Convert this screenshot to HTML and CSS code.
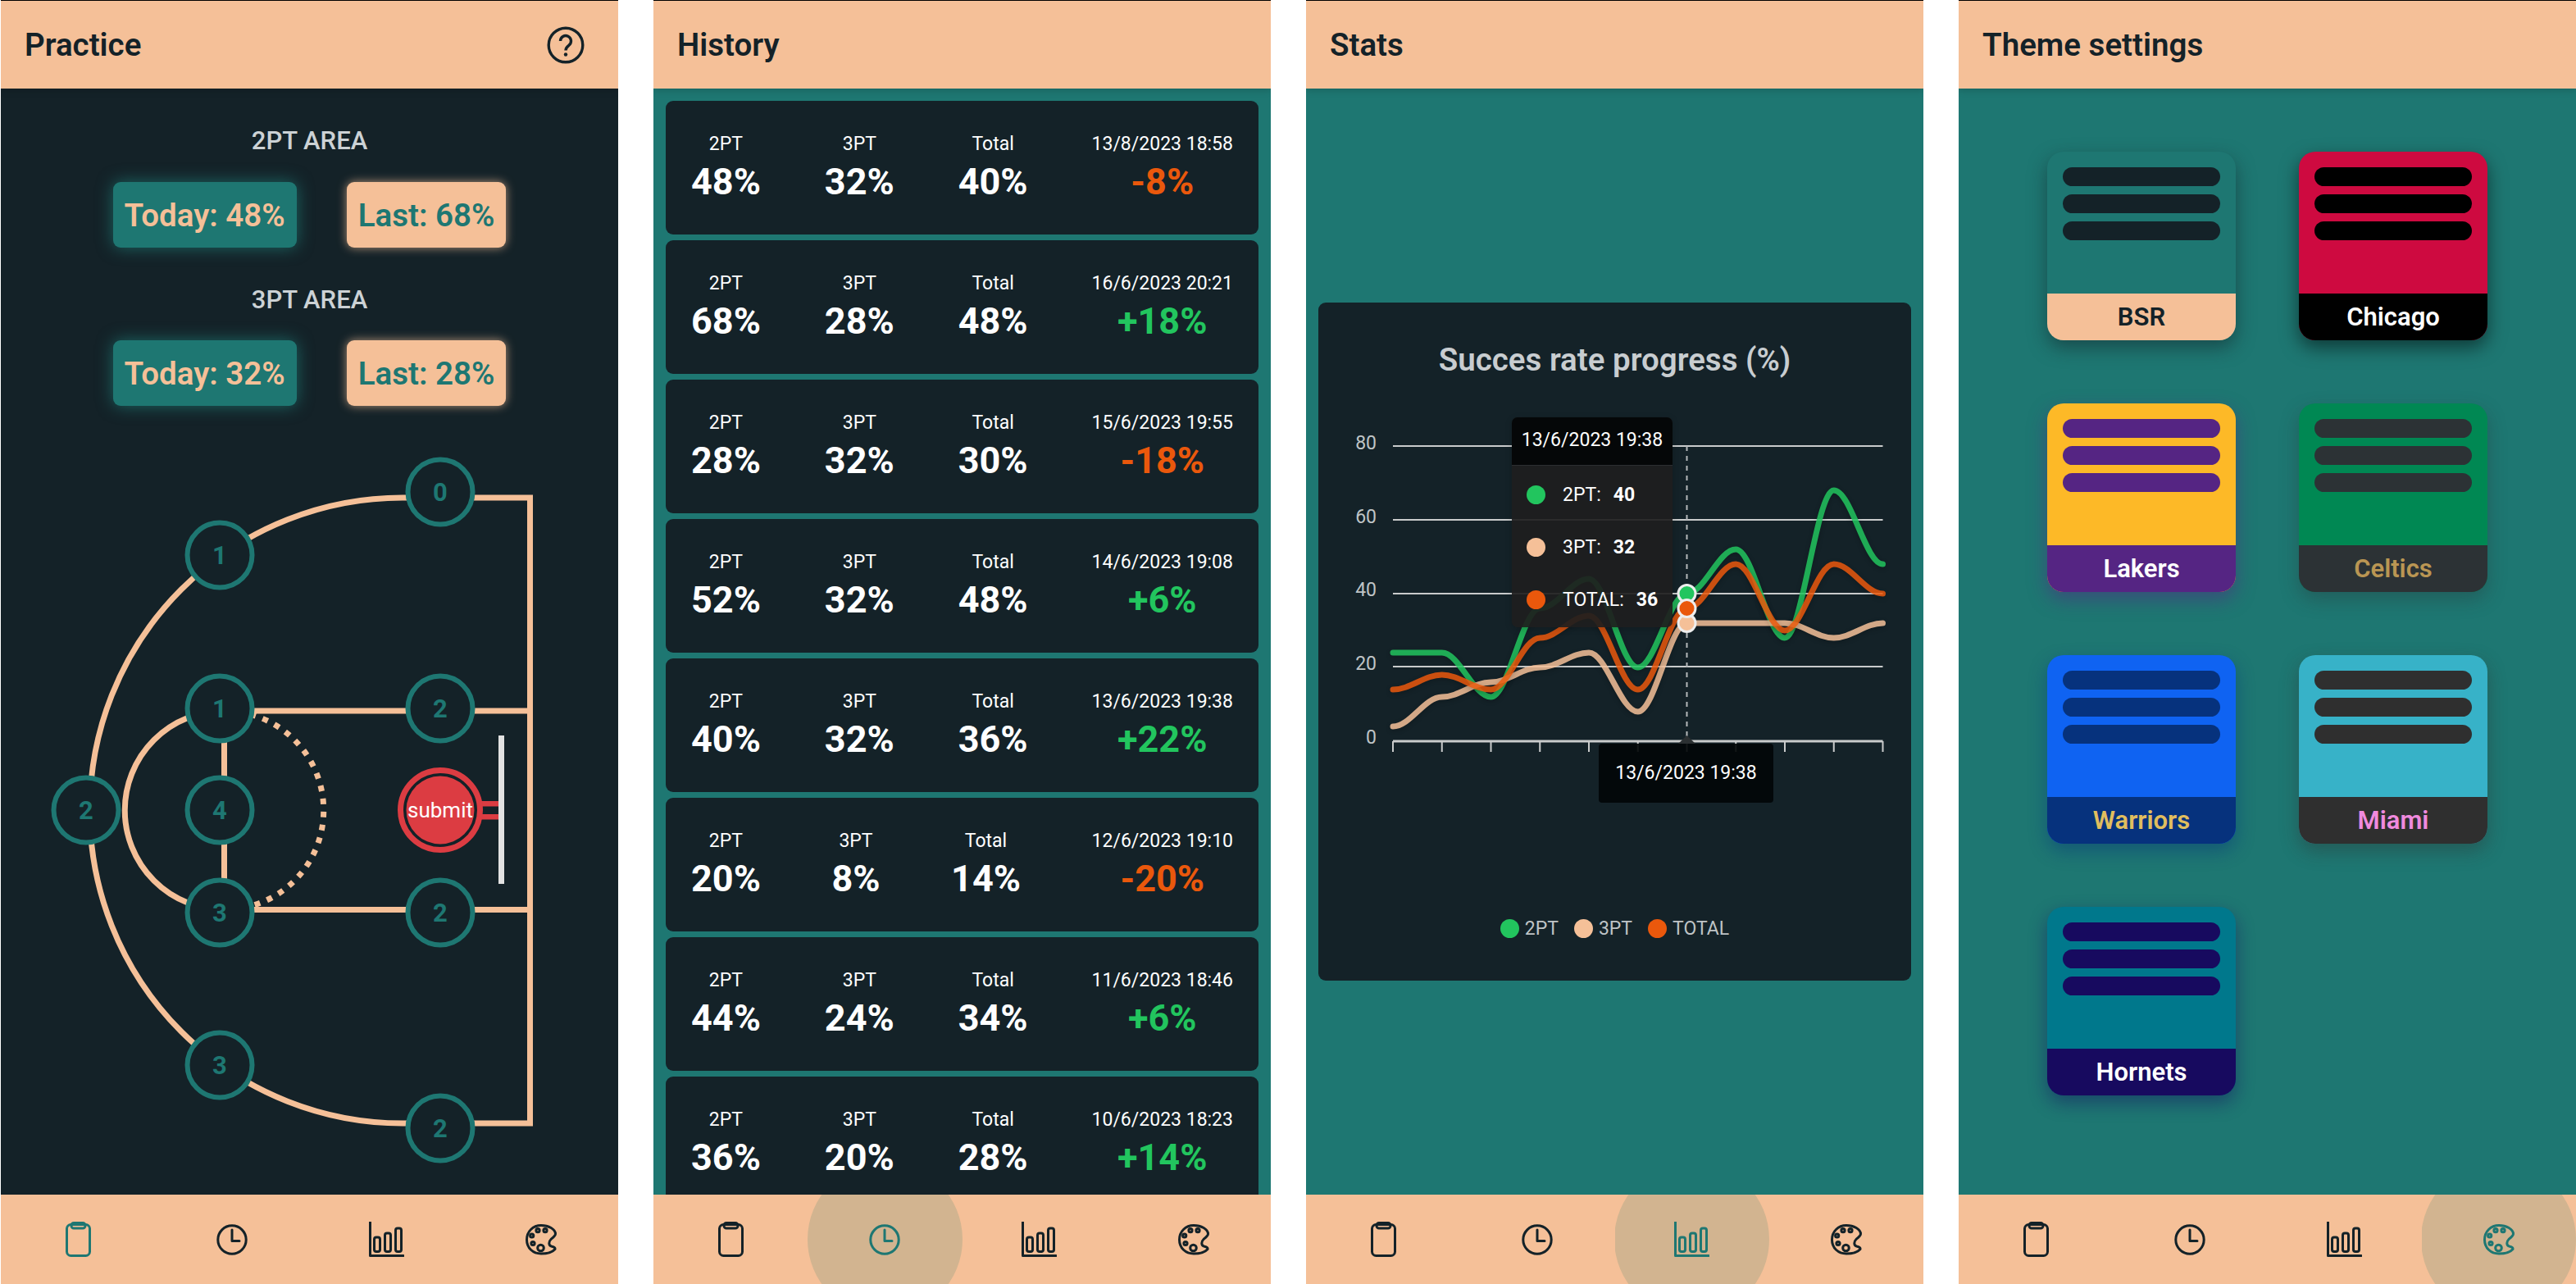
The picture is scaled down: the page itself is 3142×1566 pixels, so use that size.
FILE: index.html
```html
<!DOCTYPE html>
<html lang="en">
<head>
<meta charset="utf-8">
<title>BSR</title>
<link rel="stylesheet" href="styles.css">
</head>
<body>
<svg class="defs" width="0" height="0" aria-hidden="true">
  <symbol id="i-clip" viewBox="0 0 31 43"><rect x="1.500" y="3.500" width="28" height="38" rx="5"/><rect x="7" y="1.500" width="17" height="6.500" rx="3"/></symbol>
  <symbol id="i-clock" viewBox="0 0 38 38"><circle cx="19" cy="19" r="17.200"/><path d="M19 7V20.500H28"/></symbol>
  <symbol id="i-chart" viewBox="0 0 43 43"><path d="M1.500 0V41.500H42"/><rect x="6.500" y="19" width="7" height="17.500" rx="2.500"/><rect x="19.500" y="14" width="7" height="22.500" rx="2.500"/><rect x="32.500" y="8" width="7" height="28.500" rx="2.500"/></symbol>
  <symbol id="i-palette" viewBox="0 0 38 38"><path d="M19 1.500C9 1.500 1.500 9 1.500 19S9 36 19 36C27 36 33 34 36 30.500C36.500 28 34 27.500 31.500 27C28 26 28 21.500 31 18.500C34 16 36.500 14 36.500 12C36.500 6 28 1.500 19 1.500Z"/><circle class="dot" cx="7.700" cy="14" r="2.100"/><circle class="dot" cx="15" cy="7.700" r="2.100"/><circle class="dot" cx="24" cy="7.700" r="2.100"/><circle class="dot" cx="9" cy="23.500" r="2.100"/><circle class="dot" cx="18.500" cy="29" r="3.800"/></symbol>
</svg>

<main class="screens">
  <!-- Practice -->
  <section class="panel panel-dark">
    <header class="topbar">
      <h1>Practice</h1>
      <svg class="help" viewBox="0 0 46 46" aria-hidden="true"><circle cx="23" cy="23" r="20.800"/><path d="M16.500 18a6.500 6.500 0 1 1 10.500 5.200c-2.600 2-4 3-4 6.300"/><circle class="dot" cx="23" cy="34.500" r="2.200"/></svg>
    </header>
    <div class="body practice">
      <h2 class="area-title">2PT AREA</h2>
      <div class="score-row">
        <div class="score score-today">Today: 48%</div>
        <div class="score score-last">Last: 68%</div>
      </div>
      <h2 class="area-title area-second">3PT AREA</h2>
      <div class="score-row">
        <div class="score score-today">Today: 32%</div>
        <div class="score score-last">Last: 28%</div>
      </div>
      <svg class="court" viewBox="0 540 753 917" role="img" aria-label="Court">
        <g class="court-lines">
          <path d="M490 607H645.500V1370H490A381.500 381.500 0 0 1 490 607Z"/>
          <path d="M267 867H645.500M267 1109.500H645.500"/>
          <path d="M272.500 867V1109.500"/>
          <path d="M272.500 867A121.250 121.250 0 0 0 272.500 1109.500"/>
          <path class="dotted" d="M272.500 867A121.250 121.250 0 0 1 272.500 1109.500"/>
        </g>
        <rect class="hoop-bar" x="607" y="897" width="7" height="181"/>
        <rect class="hoop-arm" x="586" y="977" width="21" height="6.500"/>
        <rect class="hoop-arm" x="586" y="993" width="21" height="6.500"/>
        <circle class="hoop-ring" cx="536" cy="988" r="48.500"/>
        <circle class="hoop-in" cx="536" cy="988" r="41.500"/>
        <text class="submit" x="536" y="988" dy=".33em">submit</text>
        <g class="node"><circle cx="536" cy="600" r="39.500"/><text x="536" y="600" dy=".36em">0</text></g>
        <g class="node"><circle cx="267" cy="677" r="39.500"/><text x="267" y="677" dy=".36em">1</text></g>
        <g class="node"><circle cx="267" cy="864" r="39.500"/><text x="267" y="864" dy=".36em">1</text></g>
        <g class="node"><circle cx="536" cy="864" r="39.500"/><text x="536" y="864" dy=".36em">2</text></g>
        <g class="node"><circle cx="267" cy="988" r="39.500"/><text x="267" y="988" dy=".36em">4</text></g>
        <g class="node"><circle cx="104" cy="988" r="39.500"/><text x="104" y="988" dy=".36em">2</text></g>
        <g class="node"><circle cx="267" cy="1113" r="39.500"/><text x="267" y="1113" dy=".36em">3</text></g>
        <g class="node"><circle cx="536" cy="1113" r="39.500"/><text x="536" y="1113" dy=".36em">2</text></g>
        <g class="node"><circle cx="267" cy="1299" r="39.500"/><text x="267" y="1299" dy=".36em">3</text></g>
        <g class="node"><circle cx="536" cy="1376" r="39.500"/><text x="536" y="1376" dy=".36em">2</text></g>
      </svg>
    </div>
    <nav class="tabs">
      <div class="tab tab-on-plain"><svg class="ic ic-clip"><use href="#i-clip"/></svg></div>
      <div class="tab"><svg class="ic ic-clock"><use href="#i-clock"/></svg></div>
      <div class="tab"><svg class="ic ic-chart"><use href="#i-chart"/></svg></div>
      <div class="tab"><svg class="ic ic-clock"><use href="#i-palette"/></svg></div>
    </nav>
  </section>

  <!-- History -->
  <section class="panel panel-teal">
    <header class="topbar"><h1>History</h1></header>
    <div class="body history">
      <article class="run">
        <div class="col"><span class="lab">2PT</span><strong>48%</strong></div>
        <div class="col"><span class="lab">3PT</span><strong>32%</strong></div>
        <div class="col"><span class="lab">Total</span><strong>40%</strong></div>
        <div class="col"><span class="lab">13/8/2023 18:58</span><strong class="down">-8%</strong></div>
      </article>
      <article class="run">
        <div class="col"><span class="lab">2PT</span><strong>68%</strong></div>
        <div class="col"><span class="lab">3PT</span><strong>28%</strong></div>
        <div class="col"><span class="lab">Total</span><strong>48%</strong></div>
        <div class="col"><span class="lab">16/6/2023 20:21</span><strong class="up">+18%</strong></div>
      </article>
      <article class="run">
        <div class="col"><span class="lab">2PT</span><strong>28%</strong></div>
        <div class="col"><span class="lab">3PT</span><strong>32%</strong></div>
        <div class="col"><span class="lab">Total</span><strong>30%</strong></div>
        <div class="col"><span class="lab">15/6/2023 19:55</span><strong class="down">-18%</strong></div>
      </article>
      <article class="run">
        <div class="col"><span class="lab">2PT</span><strong>52%</strong></div>
        <div class="col"><span class="lab">3PT</span><strong>32%</strong></div>
        <div class="col"><span class="lab">Total</span><strong>48%</strong></div>
        <div class="col"><span class="lab">14/6/2023 19:08</span><strong class="up">+6%</strong></div>
      </article>
      <article class="run">
        <div class="col"><span class="lab">2PT</span><strong>40%</strong></div>
        <div class="col"><span class="lab">3PT</span><strong>32%</strong></div>
        <div class="col"><span class="lab">Total</span><strong>36%</strong></div>
        <div class="col"><span class="lab">13/6/2023 19:38</span><strong class="up">+22%</strong></div>
      </article>
      <article class="run">
        <div class="col"><span class="lab">2PT</span><strong>20%</strong></div>
        <div class="col"><span class="lab">3PT</span><strong>8%</strong></div>
        <div class="col"><span class="lab">Total</span><strong>14%</strong></div>
        <div class="col"><span class="lab">12/6/2023 19:10</span><strong class="down">-20%</strong></div>
      </article>
      <article class="run">
        <div class="col"><span class="lab">2PT</span><strong>44%</strong></div>
        <div class="col"><span class="lab">3PT</span><strong>24%</strong></div>
        <div class="col"><span class="lab">Total</span><strong>34%</strong></div>
        <div class="col"><span class="lab">11/6/2023 18:46</span><strong class="up">+6%</strong></div>
      </article>
      <article class="run">
        <div class="col"><span class="lab">2PT</span><strong>36%</strong></div>
        <div class="col"><span class="lab">3PT</span><strong>20%</strong></div>
        <div class="col"><span class="lab">Total</span><strong>28%</strong></div>
        <div class="col"><span class="lab">10/6/2023 18:23</span><strong class="up">+14%</strong></div>
      </article>
    </div>
    <nav class="tabs">
      <div class="tab"><svg class="ic ic-clip"><use href="#i-clip"/></svg></div>
      <div class="tab tab-on"><svg class="ic ic-clock"><use href="#i-clock"/></svg></div>
      <div class="tab"><svg class="ic ic-chart"><use href="#i-chart"/></svg></div>
      <div class="tab"><svg class="ic ic-clock"><use href="#i-palette"/></svg></div>
    </nav>
  </section>

  <!-- Stats -->
  <section class="panel panel-teal">
    <header class="topbar"><h1>Stats</h1></header>
    <div class="body stats">
      <div class="chart-card">
        <h2 class="chart-title">Succes rate progress (%)</h2>
        <div class="chart">
          <svg class="plot" viewBox="0 140 723 600" role="img" aria-label="Succes rate progress">
            <g class="grid">
              <path d="M91 175H688.500M91 265H688.500M91 355H688.500M91 444H688.500"/>
              <path class="axis" d="M91 535H688.500"/>
              <path d="M91 535V548M150.750 535V548M210.500 535V548M270.250 535V548M330 535V548M389.750 535V548M449.500 535V548M509.250 535V548M569 535V548M628.750 535V548M688.500 535V548"/>
            </g>
            <g class="ylabels">
              <text x="71" y="171" dy=".35em">80</text>
              <text x="71" y="261" dy=".35em">60</text>
              <text x="71" y="350" dy=".35em">40</text>
              <text x="71" y="440" dy=".35em">20</text>
              <text x="71" y="530" dy=".35em">0</text>
            </g>
            <path class="cross" d="M449.500 175V535"/>
            <path class="line line-2pt" d="M91 427C112 427 129.750 427 150.750 427S189.500 481 210.500 481S249.250 373 270.250 373S309 337 330 337S368.750 445 389.750 445S428.500 355 449.500 355S488.250 301 509.250 301S548 409 569 409S607.750 229 628.750 229S667.500 319 688.500 319"/>
            <path class="line line-3pt" d="M91 517C112 517 129.750 481 150.750 481S189.500 463 210.500 463S249.250 445 270.250 445S309 427 330 427S368.750 499 389.750 499S428.500 391 449.500 391S488.250 391 509.250 391S548 391 569 391S607.750 409 628.750 409S667.500 391 688.500 391"/>
            <path class="line line-tot" d="M91 472C112 472 129.750 454 150.750 454S189.500 472 210.500 472S249.250 409 270.250 409S309 382 330 382S368.750 472 389.750 472S428.500 373 449.500 373S488.250 319 509.250 319S548 400 569 400S607.750 319 628.750 319S667.500 355 688.500 355"/>
            <circle class="mark mark-2pt" cx="449.500" cy="355" r="10.500"/>
            <circle class="mark mark-3pt" cx="449.500" cy="391" r="10.500"/>
            <circle class="mark mark-tot" cx="449.500" cy="373" r="10.500"/>
            <path class="xcaret" d="M449.500 528L460 538H439Z"/>
          </svg>
          <div class="tip">
            <div class="tip-title">13/6/2023 19:38</div>
            <div class="tip-row"><i class="dot-2pt"></i><span>2PT:</span><b>40</b></div>
            <div class="tip-row"><i class="dot-3pt"></i><span>3PT:</span><b>32</b></div>
            <div class="tip-row"><i class="dot-tot"></i><span>TOTAL:</span><b>36</b></div>
          </div>
          <div class="xtip">13/6/2023 19:38</div>
        </div>
        <div class="legend">
          <div class="legend-item"><i class="dot-2pt"></i>2PT</div>
          <div class="legend-item"><i class="dot-3pt"></i>3PT</div>
          <div class="legend-item"><i class="dot-tot"></i>TOTAL</div>
        </div>
      </div>
    </div>
    <nav class="tabs">
      <div class="tab"><svg class="ic ic-clip"><use href="#i-clip"/></svg></div>
      <div class="tab"><svg class="ic ic-clock"><use href="#i-clock"/></svg></div>
      <div class="tab tab-on"><svg class="ic ic-chart"><use href="#i-chart"/></svg></div>
      <div class="tab"><svg class="ic ic-clock"><use href="#i-palette"/></svg></div>
    </nav>
  </section>

  <!-- Theme settings -->
  <section class="panel panel-teal">
    <header class="topbar"><h1>Theme settings</h1></header>
    <div class="body themes">
      <div class="theme t-bsr"><div class="theme-top"><span></span><span></span><span></span></div><div class="theme-name">BSR</div></div>
      <div class="theme t-chicago"><div class="theme-top"><span></span><span></span><span></span></div><div class="theme-name">Chicago</div></div>
      <div class="theme t-lakers"><div class="theme-top"><span></span><span></span><span></span></div><div class="theme-name">Lakers</div></div>
      <div class="theme t-celtics"><div class="theme-top"><span></span><span></span><span></span></div><div class="theme-name">Celtics</div></div>
      <div class="theme t-warriors"><div class="theme-top"><span></span><span></span><span></span></div><div class="theme-name">Warriors</div></div>
      <div class="theme t-miami"><div class="theme-top"><span></span><span></span><span></span></div><div class="theme-name">Miami</div></div>
      <div class="theme t-hornets"><div class="theme-top"><span></span><span></span><span></span></div><div class="theme-name">Hornets</div></div>
    </div>
    <nav class="tabs">
      <div class="tab"><svg class="ic ic-clip"><use href="#i-clip"/></svg></div>
      <div class="tab"><svg class="ic ic-clock"><use href="#i-clock"/></svg></div>
      <div class="tab"><svg class="ic ic-chart"><use href="#i-chart"/></svg></div>
      <div class="tab tab-on"><svg class="ic ic-clock"><use href="#i-palette"/></svg></div>
    </nav>
  </section>
</main>
</body>
</html>
```

FILE: styles.css
```css
* { box-sizing: border-box; }

html, body {
  margin: 0;
  padding: 0;
  background: #fff;
  font-family: Roboto, "Liberation Sans", sans-serif;
}

.defs { position: absolute; }

.screens {
  display: flex;
  gap: 43px;
  padding-left: 1px;
  height: 1566px;
  overflow: hidden;
}

.panel {
  width: 753px;
  flex: none;
  display: flex;
  flex-direction: column;
  height: 100%;
  border-top: 1px solid #000;
  overflow: hidden;
}

.panel-dark { background: #142228; }
.panel-teal { background: #1e7772; }

.topbar {
  height: 107px;
  flex: none;
  display: flex;
  align-items: center;
  justify-content: space-between;
  padding: 0 41px 0 29px;
  background: #f5c098;
  position: relative;
  z-index: 2;
  box-shadow: 0 3px 8px rgba(0, 0, 0, .14);
}

.topbar h1 {
  margin: 0;
  font-size: 38.5px;
  font-weight: 600;
  color: #142228;
}

.help {
  width: 46px;
  height: 46px;
  fill: none;
  stroke: #142228;
  stroke-width: 3.4;
}

.help .dot { fill: #142228; stroke: none; }

.body {
  flex: 1;
  min-height: 0;
  overflow: hidden;
}

/* Practice */
.practice {
  display: flex;
  flex-direction: column;
  align-items: center;
  padding-top: 44px;
}

.area-title {
  margin: 0 0 30px;
  height: 40px;
  line-height: 40px;
  font-size: 31px;
  font-weight: 500;
  color: #ccd2d5;
}

.area-second { margin: 44px 0 29px; }

.score-row {
  display: flex;
  gap: 61px;
  height: 80px;
}

.score {
  display: flex;
  align-items: center;
  padding: 0 14px;
  border-radius: 9px;
  font-size: 38.5px;
  font-weight: 600;
}

.score-today {
  background: #1e7772;
  color: #f5c098;
  box-shadow: 0 0 20px rgba(30, 119, 114, .8);
}

.score-last {
  background: #f5c098;
  color: #1e7772;
  box-shadow: 0 0 12px rgba(245, 192, 152, .7);
}

.court {
  flex: none;
  display: block;
  width: 753px;
  height: 917px;
  margin-top: 45px;
}

.court-lines path {
  fill: none;
  stroke: #f5c098;
  stroke-width: 7;
}

.court-lines .dotted { stroke-dasharray: 7 9; }

.hoop-bar { fill: #e2e2e2; }
.hoop-arm { fill: #dc3c42; }
.hoop-ring { fill: #142228; stroke: #dc3c42; stroke-width: 7; }
.hoop-in { fill: #dc3c42; }

.submit {
  fill: #fff;
  font-size: 26px;
  text-anchor: middle;
}

.node circle {
  fill: #142228;
  stroke: #1e7772;
  stroke-width: 6;
}

.node text {
  fill: #1e7772;
  font-size: 31px;
  font-weight: 700;
  text-anchor: middle;
}

/* History */
.history {
  display: flex;
  flex-direction: column;
  gap: 7px;
  padding: 15px 15px 0;
}

.run {
  flex: none;
  height: 163px;
  display: flex;
  align-items: center;
  justify-content: space-between;
  padding: 2px 31px 0;
  background: #142228;
  border-radius: 9px;
}

.col {
  display: flex;
  flex-direction: column;
  align-items: center;
  gap: 6px;
  color: #fff;
}

.lab {
  height: 26px;
  line-height: 26px;
  font-size: 23px;
}

.col strong {
  height: 54px;
  line-height: 54px;
  font-size: 45px;
  font-weight: 700;
}

.col .up { color: #22c55e; }
.col .down { color: #ea580c; }

/* Stats */
.stats {
  display: flex;
  align-items: center;
  padding: 0 15px;
}

.chart-card {
  flex: 1;
  height: 827px;
  background: #142228;
  border-radius: 9px;
}

.chart-title {
  margin: 0;
  height: 140px;
  line-height: 140px;
  text-align: center;
  font-size: 38.5px;
  font-weight: 600;
  color: #c8cdd0;
}

.chart {
  position: relative;
  height: 600px;
}

.plot {
  display: block;
  width: 723px;
  height: 600px;
}

.grid path {
  fill: none;
  stroke: #c9cbcb;
  stroke-width: 2;
}

.grid .axis { stroke-width: 3; }

.ylabels text {
  fill: #bfc4c6;
  font-size: 23px;
  text-anchor: end;
}

.cross {
  fill: none;
  stroke: #b4b8ba;
  stroke-width: 2;
  stroke-dasharray: 6 6;
}

.line {
  fill: none;
  stroke-width: 7;
  stroke-linecap: round;
  opacity: .85;
  filter: drop-shadow(0 2px 3px rgba(0, 0, 0, .25));
}

.line-2pt { stroke: #22c55e; }
.line-3pt { stroke: #f5c098; }
.line-tot { stroke: #ea580c; }

.mark { stroke: #eee; stroke-width: 3; }
.mark-2pt { fill: #22c55e; }
.mark-3pt { fill: #f5c098; }
.mark-tot { fill: #ea580c; }

.xcaret { fill: #2b3032; }

.tip {
  position: absolute;
  left: 236px;
  top: 0;
  width: 196px;
  height: 256px;
  border-radius: 7px;
  overflow: hidden;
  background: rgba(30, 30, 30, .92);
  box-shadow: 0 2px 8px rgba(0, 0, 0, .18);
  color: #fff;
  font-size: 23px;
}

.tip-title {
  height: 59px;
  padding-top: 1px;
  line-height: 54px;
  text-align: center;
  background: #050708;
  border-bottom: 1px solid #2c2f31;
  margin-bottom: 3px;
}

.tip-row {
  height: 64px;
  display: flex;
  align-items: center;
  padding-left: 18px;
}

.tip-row i, .legend-item i {
  width: 23px;
  height: 23px;
  border-radius: 50%;
  flex: none;
}

.tip-row i { margin-right: 21px; }
.tip-row b { margin-left: 15px; font-weight: 700; }

.dot-2pt { background: #22c55e; }
.dot-3pt { background: #f5c098; }
.dot-tot { background: #ea580c; }

.xtip {
  position: absolute;
  left: 342px;
  top: 398px;
  width: 213px;
  height: 72px;
  line-height: 72px;
  text-align: center;
  border-radius: 4px;
  background: rgba(2, 6, 8, .92);
  color: #fff;
  font-size: 23px;
}

.legend {
  height: 46px;
  display: flex;
  justify-content: center;
  align-items: center;
  gap: 19px;
  color: #bfc4c6;
  font-size: 23px;
}

.legend-item {
  display: flex;
  align-items: center;
  gap: 7px;
}

/* Themes */
.themes {
  display: grid;
  grid-template-columns: 230px 230px;
  grid-auto-rows: 230px;
  gap: 77px;
  align-content: start;
  padding: 77px 108px 0;
}

.theme {
  display: flex;
  flex-direction: column;
  border-radius: 20px;
  overflow: hidden;
  background: var(--top);
  box-shadow: 0 9px 22px var(--glow);
}

.theme-top {
  flex: 1;
  display: flex;
  flex-direction: column;
  gap: 10px;
  padding: 19px;
}

.theme-top span {
  height: 23px;
  border-radius: 12px;
  background: var(--dark);
}

.theme-name {
  height: 57px;
  line-height: 57px;
  text-align: center;
  font-size: 31px;
  font-weight: 600;
  background: var(--foot);
  color: var(--ink);
}

.t-bsr { --top: #1e7772; --dark: #142228; --foot: #f5c098; --ink: #142228; --glow: rgba(20, 34, 40, .5); }
.t-chicago { --top: #ce0a40; --dark: #000; --foot: #000; --ink: #fff; --glow: rgba(0, 0, 0, .5); }
.t-lakers { --top: #fdb927; --dark: #552583; --foot: #552583; --ink: #fff; --glow: rgba(85, 37, 131, .5); }
.t-celtics { --top: #008853; --dark: #2c3235; --foot: #2c3235; --ink: #ba9653; --glow: rgba(44, 50, 53, .35); }
.t-warriors { --top: #0f63f2; --dark: #06327d; --foot: #06327d; --ink: #e0be5e; --glow: rgba(6, 50, 125, .45); }
.t-miami { --top: #37b2c8; --dark: #2f2f2f; --foot: #2f2f2f; --ink: #f08ade; --glow: rgba(47, 47, 47, .4); }
.t-hornets { --top: #00788c; --dark: #170a5f; --foot: #170a5f; --ink: #fff; --glow: rgba(23, 10, 95, .45); }

/* Tabs */
.tabs {
  flex: none;
  height: 109px;
  display: flex;
  background: #f5c098;
  position: relative;
  z-index: 2;
}

.tab {
  flex: 1;
  position: relative;
  display: flex;
  align-items: center;
  justify-content: center;
  overflow: hidden;
  color: #142228;
}

.tab-on, .tab-on-plain { color: #1e7772; }

.tab-on::before {
  content: "";
  position: absolute;
  left: 50%;
  top: 50%;
  width: 189px;
  height: 189px;
  margin: -94.5px 0 0 -94.5px;
  border-radius: 50%;
  background: #d2b490;
}

.ic {
  position: relative;
  fill: none;
  stroke: currentColor;
  stroke-width: 3;
  stroke-linecap: round;
  stroke-linejoin: round;
}

.ic .dot { fill: currentColor; stroke: none; }

.ic-clip { width: 31px; height: 43px; }
.ic-clock { width: 38px; height: 38px; }
.ic-chart { width: 43px; height: 43px; }
```
